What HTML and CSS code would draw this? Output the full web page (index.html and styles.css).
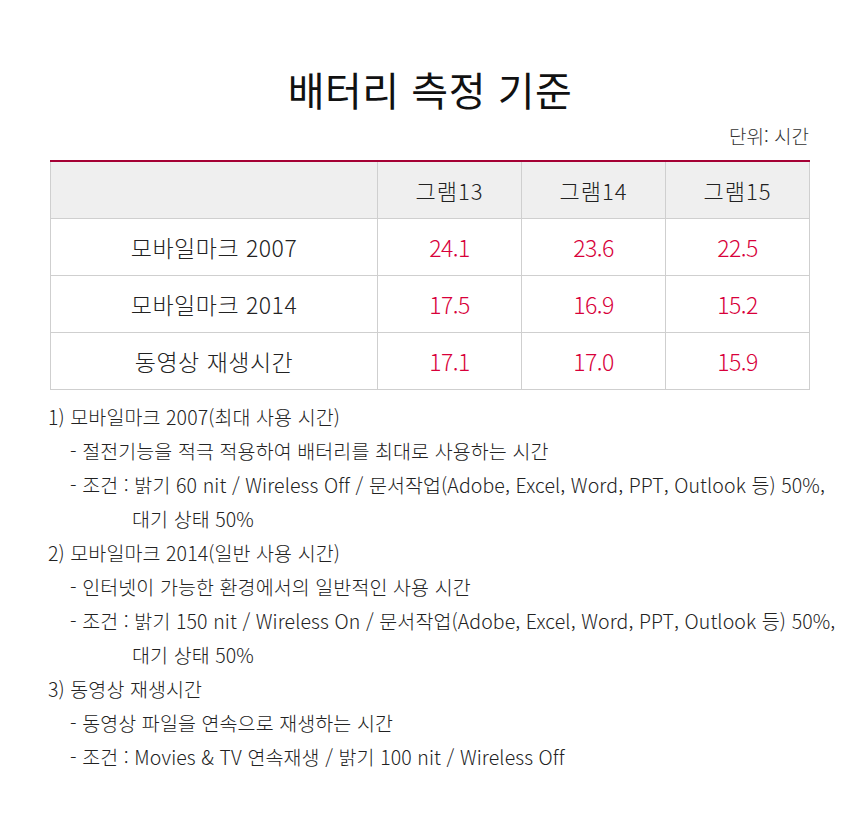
FILE: index.html
```html
<!DOCTYPE html>
<html lang="ko">
<head>
<meta charset="utf-8">
<link rel="stylesheet" href="styles.css">
</head>
<body>
<div class="page">
  <h1 class="title">배터리 측정 기준</h1>
  <div class="unit">단위: 시간</div>
  <table class="spec">
    <thead>
      <tr><th class="label"></th><th>그램13</th><th>그램14</th><th>그램15</th></tr>
    </thead>
    <tbody>
      <tr><td class="label">모바일마크 2007</td><td class="num">24.1</td><td class="num">23.6</td><td class="num">22.5</td></tr>
      <tr><td class="label">모바일마크 2014</td><td class="num">17.5</td><td class="num">16.9</td><td class="num">15.2</td></tr>
      <tr><td class="label">동영상 재생시간</td><td class="num">17.1</td><td class="num">17.0</td><td class="num">15.9</td></tr>
    </tbody>
  </table>
  <div class="notes">
    <p class="head">1) 모바일마크 2007(최대 사용 시간)</p>
    <p class="item">- 절전기능을 적극 적용하여 배터리를 최대로 사용하는 시간</p>
    <p class="item">- 조건 : 밝기 60 nit / Wireless Off / 문서작업(Adobe, Excel, Word, PPT, Outlook 등) 50%,</p>
    <p class="cont">대기 상태 50%</p>
    <p class="head">2) 모바일마크 2014(일반 사용 시간)</p>
    <p class="item">- 인터넷이 가능한 환경에서의 일반적인 사용 시간</p>
    <p class="item">- 조건 : 밝기 150 nit / Wireless On / 문서작업(Adobe, Excel, Word, PPT, Outlook 등) 50%,</p>
    <p class="cont">대기 상태 50%</p>
    <p class="head">3) 동영상 재생시간</p>
    <p class="item">- 동영상 파일을 연속으로 재생하는 시간</p>
    <p class="item">- 조건 : Movies &amp; TV 연속재생 / 밝기 100 nit / Wireless Off</p>
  </div>
</div>
</body>
</html>
```
FILE: styles.css
```css
html, body {
  margin: 0;
  padding: 0;
  background: #fff;
}
body {
  font-family: "Noto Sans CJK KR", "Noto Sans", sans-serif;
  color: #222;
}
.page {
  width: 860px;
  padding-top: 61px;
}
.title {
  margin: 0;
  text-align: center;
  font-size: 40px;
  font-weight: 400;
  line-height: 56px;
  color: #111;
  letter-spacing: 0.5px;
}
.unit {
  width: 759px;
  margin: 6px 0 0 50px;
  text-align: right;
  font-size: 19px;
  font-weight: 300;
  line-height: 26px;
  color: #333;
}
.spec {
  margin: 11px 0 0 50px;
  width: 760px;
  border-collapse: collapse;
  border-top: 2px solid #a50034;
  table-layout: fixed;
}
.spec th, .spec td {
  border: 1px solid #cfcfcf;
  text-align: center;
  height: 56px;
  padding: 0;
  font-weight: 300;
  font-size: 23px;
  color: #222;
}
.spec th {
  font-size: 22px;
  letter-spacing: 1px;
}
.spec thead tr {
  background: #efefef;
}
.spec thead th {
  border-top: none;
}
.spec .label {
  width: 326px;
  letter-spacing: 0.5px;
}
.spec .num {
  color: #d8003a;
  font-size: 23px;
  letter-spacing: -0.5px;
}
.notes {
  margin: 10px 0 0 48px;
  font-size: 19.5px;
  font-weight: 300;
  letter-spacing: 0.1px;
  color: #222;
}
.notes p {
  margin: 0;
  line-height: 34px;
  white-space: nowrap;
}
.notes .item {
  padding-left: 22px;
}
.notes .cont {
  padding-left: 84px;
}
```
